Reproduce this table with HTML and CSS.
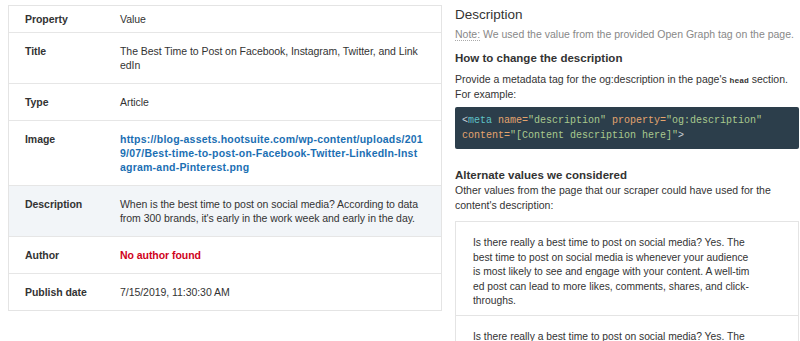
FILE: index.html
```html
<!DOCTYPE html>
<html lang="en">
<head>
  <meta charset="UTF-8">
  <title>Open Graph preview</title>
  <link rel="stylesheet" href="styles.css">
</head>
<body>
  <div class="page">
    <div class="props">
      <div class="row head">
        <div class="key">Property</div>
        <div class="val">Value</div>
      </div>
      <div class="row">
        <div class="key">Title</div>
        <div class="val">The Best Time to Post on Facebook, Instagram, Twitter, and LinkedIn</div>
      </div>
      <div class="row">
        <div class="key">Type</div>
        <div class="val">Article</div>
      </div>
      <div class="row">
        <div class="key">Image</div>
        <div class="val link">https://blog-assets.hootsuite.com/wp-content/uploads/2019/07/Best-time-to-post-on-Facebook-Twitter-LinkedIn-Instagram-and-Pinterest.png</div>
      </div>
      <div class="row active">
        <div class="key">Description</div>
        <div class="val">When is the best time to post on social media? According to data from 300 brands, it's early in the work week and early in the day.</div>
      </div>
      <div class="row">
        <div class="key">Author</div>
        <div class="val missing">No author found</div>
      </div>
      <div class="row">
        <div class="key">Publish date</div>
        <div class="val">7/15/2019, 11:30:30 AM</div>
      </div>
    </div>

    <div class="detail">
      <h2>Description</h2>
      <p class="note"><span class="note-label">Note:</span> We used the value from the provided Open Graph tag on the page.</p>
      <h3>How to change the description</h3>
      <p>Provide a metadata tag for the og:description in the page's <code class="inline">head</code> section. For example:</p>
      <pre class="code"><span class="p">&lt;</span><span class="t">meta</span> <span class="a">name=</span><span class="s">"description"</span> <span class="a">property=</span><span class="s">"og:description"</span>
<span class="a">content=</span><span class="s">"[Content description here]"</span><span class="p">&gt;</span></pre>
      <h3 class="alt-title">Alternate values we considered</h3>
      <p class="tight">Other values from the page that our scraper could have used for the content's description:</p>
      <div class="alts">
        <div class="alt"><p>Is there really a best time to post on social media? Yes. The best time to post on social media is whenever your audience is most likely to see and engage with your content. A well-timed post can lead to more likes, comments, shares, and click-throughs.</p></div>
        <div class="alt"><p>Is there really a best time to post on social media? Yes. The best time to post on social media is whenever your audience is most likely to see and engage with your content.</p></div>
      </div>
    </div>
  </div>
</body>
</html>
```

FILE: styles.css
```css
body { margin: 0; font-family: "Liberation Sans", Arial, sans-serif; font-size: 10.5px; letter-spacing: -0.05px; color: #333; background: #fff; overflow: hidden; }
.page { display: flex; gap: 13px; padding: 5px 0 0 8px; }

.props { width: 432px; flex-shrink: 0; border: 1px solid #e4e4e4; align-self: flex-start; }
.row { display: flex; border-top: 1px solid #e6e6e6; padding: 11px 0; line-height: 14px; }
.row:first-child { border-top: none; }
.row.head { padding: 6px 0; }
.row.active { background-color: #f2f5f8; }
.key { width: 95px; padding-left: 16px; flex-shrink: 0; font-weight: bold; color: #333; }
.val { width: 303px; word-break: break-all; }
.link { color: #1b6fb3; font-weight: bold; letter-spacing: 0.22px; }
.missing { color: #d0021b; font-weight: bold; }

.detail { width: 344px; flex-shrink: 0; letter-spacing: 0; }
.detail h2 { font-size: 13.5px; font-weight: normal; margin: 1px 0 0; line-height: 18px; }
.detail p { margin: 0; line-height: 15px; }
.detail .note { color: #888; margin-top: 3px; }
.note-label { border-bottom: 1px dotted #aaa; }
.detail h3 { font-size: 11.5px; margin: 8px 0 6px; line-height: 16px; }
.inline { font-family: "Liberation Mono", monospace; font-weight: bold; font-size: 8px; line-height: 10px; }

.code { background-color: #2c3e4b; color: #c8d0d6; font-family: "Liberation Mono", monospace; font-size: 10px; line-height: 15px; margin: 5px 0 0; padding: 6px 7px; border-radius: 2px; }
.code .t { color: #5ec2c8; }
.code .a { color: #e4a46e; }
.code .s { color: #a9c98e; }
.code .p { color: #c8d0d6; }

.detail .alt-title { margin: 18px 0 0; }
.detail .tight { line-height: 14.5px; }

.alts { margin-top: 9px; border: 1px solid #e4e4e4; }
.alt { border-top: 1px solid #e4e4e4; padding: 14px 17px 6px; }
.alt:first-child { border-top: none; }
.alt p { width: 277px; font-size: 10.3px; word-break: break-all; line-height: 14.5px; }
```
